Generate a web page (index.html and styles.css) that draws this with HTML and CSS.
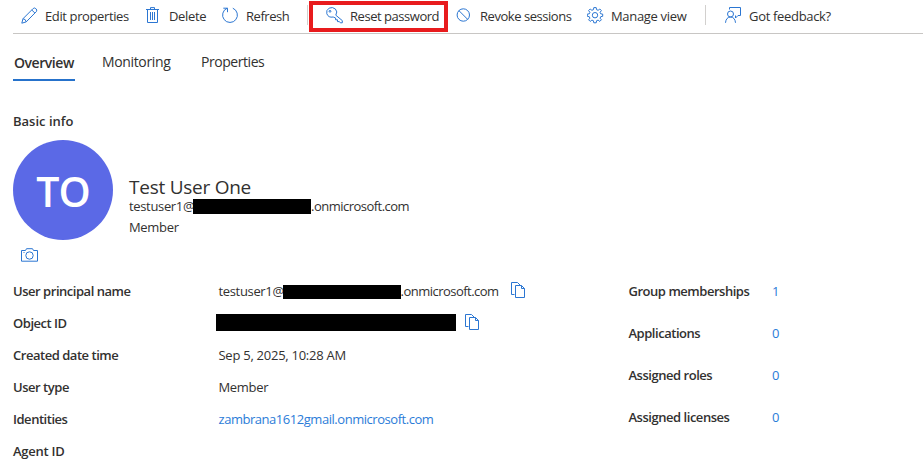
FILE: index.html
```html
<!DOCTYPE html>
<html lang="en">
<head>
<meta charset="utf-8">
<title>Test User One</title>
<link rel="stylesheet" href="styles.css">
</head>
<body>
<svg width="0" height="0" class="defs">
  <symbol id="copy" viewBox="0 0 16 18">
    <path d="M4.5 13.5H1.5V1.5H7.5L10 4M5.5 4.5H11.5L14.5 7.5V16.5H5.5ZM11.5 4.5V7.5H14.5"/>
  </symbol>
</svg>
<nav class="toolbar">
  <div class="cmd"><svg class="icon" viewBox="0 0 17 17"><path d="M.8 16.2 2 11.7 12.2 1.5Q13.4.4 14.8 1.6 16.5 3 15.4 4.5L5.2 14.9ZM2 11.7Q4.8 12 5.2 14.9M10.8 3 14 6.2"/></svg><span class="edit">Edit properties</span></div>
  <div class="cmd"><svg class="icon" viewBox="0 0 17 17"><path d="M1 2.5H14M5.5 2.5V.6H9.5V2.5M2.5 2.5V15.5H12.5V2.5M5.5 5V13M7.5 5V13M9.5 5V13"/></svg><span>Delete</span></div>
  <div class="cmd"><svg class="icon" viewBox="0 0 17 17"><path d="M5.2 1.2A7.4 7.4 0 1 0 10.8 1.2M1.3 1.2H5.5V5.2"/></svg><span class="tight">Refresh</span></div>
  <span class="divider"></span>
  <div class="cmd highlighted"><svg class="icon" viewBox="0 0 17 17"><path d="M9.8 8.2Q12 4.8 9.4 2 6.6-.4 3.2 1.1-.2 3.2.8 6.7 2.4 11 7.2 10L9.6 11V12.8H11.5V14.6H13.4L14.3 15.8H16.3V13.6Z"/><circle cx="4" cy="4.3" r=".9"/></svg><span class="tight">Reset password</span></div>
  <div class="cmd"><svg class="icon" viewBox="0 0 17 17"><circle cx="7.3" cy="8" r="6.2"/><path d="M2.9 3.6 11.7 12.4"/></svg><span class="tight">Revoke sessions</span></div>
  <div class="cmd"><svg class="icon" viewBox="0 0 17 17"><path d="M6.8.6H9.2L9.6 2.7 11.1 3.3 12.8 2 14.4 3.6 13.1 5.3 13.7 6.8 15.7 7.1V9.3L13.7 9.7 13.1 11.2 14.4 12.8 12.8 14.4 11.1 13.1 9.6 13.7 9.2 15.8H6.8L6.4 13.7 4.9 13.1 3.2 14.4 1.6 12.8 2.9 11.2 2.3 9.7.3 9.3V7.1L2.3 6.8 2.9 5.3 1.6 3.6 3.2 2 4.9 3.3 6.4 2.7Z"/><circle cx="8" cy="8.2" r="2.7"/></svg><span>Manage view</span></div>
  <span class="divider"></span>
  <div class="cmd"><svg class="icon" viewBox="0 0 17 17"><circle cx="5.5" cy="7" r="3"/><path d="M.5 15.8Q1 10.2 5.5 10 10 10.2 10.5 15.8M4.5 2.5V.5H15.5V8.5H13L10.5 11V8.5"/></svg><span>Got feedback?</span></div>
</nav>
<div class="tabs">
  <span class="tab active">Overview</span>
  <span class="tab">Monitoring</span>
  <span class="tab">Properties</span>
</div>
<main>
  <h2>Basic info</h2>
  <section class="profile">
    <div class="avatar">TO</div>
    <div class="identity">
      <h1>Test User One</h1>
      <p class="address"><span class="name">testuser1@</span><span class="redacted"></span><span class="domain">.onmicrosoft.com</span></p>
      <p>Member</p>
    </div>
  </section>
  <svg class="camera" viewBox="0 0 17 14"><path d="M.5 2.5H4.5L5.5.7H11.5L12.5 2.5H16.5V13.2H.5Z"/><circle cx="8.5" cy="7.5" r="3.7"/><path d="M2.5 4.5H3.5"/></svg>
  <div class="details">
    <dl class="facts">
      <dt>User principal name</dt><dd class="address"><span class="name">testuser1@</span><span class="redacted short"></span><span class="domain">.onmicrosoft.com</span><svg class="copy"><use href="#copy"/></svg></dd>
      <dt>Object ID</dt><dd class="address"><span class="redacted object"></span><svg class="copy near"><use href="#copy"/></svg></dd>
      <dt>Created date time</dt><dd class="date">Sep 5, 2025, 10:28 AM</dd>
      <dt>User type</dt><dd>Member</dd>
      <dt>Identities</dt><dd class="link tight">zambrana1612gmail.onmicrosoft.com</dd>
      <dt class="loose">Agent ID</dt><dd></dd>
    </dl>
    <dl class="counts">
      <dt>Group memberships</dt><dd class="link">1</dd>
      <dt>Applications</dt><dd class="link">0</dd>
      <dt>Assigned roles</dt><dd class="link">0</dd>
      <dt>Assigned licenses</dt><dd class="link">0</dd>
    </dl>
  </div>
</main>
</body>
</html>
```
FILE: styles.css
```css
*, *::before { box-sizing: border-box; }
body {
  margin: 0;
  height: 468px;
  overflow: hidden;
  background: #fff;
  color: #323130;
  font: 13px/20px "Open Sans", "Noto Sans", sans-serif;
  letter-spacing: -0.32px;
  white-space: nowrap;
}
h1, h2, p, dl, dd { margin: 0; }
.defs { display: block; }
svg { fill: none; stroke: #2b76d2; stroke-width: 1; flex: none; }
.tight { letter-spacing: -0.46px; }
.edit { letter-spacing: -0.38px; }
.date { letter-spacing: -0.26px; }
.toolbar {
  display: grid;
  grid-template-columns: 124px 77px 85px 19px 130px 131px 118px 20px 1fr;
  align-items: center;
  height: 34px;
  margin-left: 13px;
  padding-left: 8px;
  border-bottom: 1px solid #c8c6c4;
}
.cmd { position: relative; display: flex; align-items: center; gap: 7px; height: 33px; padding-bottom: 1px; }
.icon { width: 17px; height: 17px; margin-top: -1px; }
.divider { width: 1px; height: 20px; background: #d2d0ce; margin-top: -3px; }
.highlighted::before {
  content: "";
  position: absolute;
  left: -17px;
  top: 1px;
  width: 139px;
  height: 31px;
  border: 4px solid #e81b1d;
}
.tabs { display: flex; gap: 27px; height: 47px; margin-left: 13px; padding-top: 18px; font-size: 14px; }
.tab { height: 29px; letter-spacing: -0.45px; }
.tab:nth-child(2) { width: 72px; letter-spacing: -0.35px; }
.tab.active { font-weight: 600; border-bottom: 2px solid #2672cb; width: 62px; padding-left: 1px; padding-top: 1px; letter-spacing: -0.45px; }
main { padding-left: 13px; }
h2 { margin-top: 30px; font-size: 13px; line-height: 20px; font-weight: 600; letter-spacing: 0; }
.profile { display: flex; gap: 16px; margin-top: 9px; }
.avatar {
  width: 100px;
  height: 100px;
  border-radius: 50%;
  background: #5b69e6;
  color: #fff;
  font-size: 41px;
  font-weight: 600;
  line-height: 103px;
  text-align: center;
  letter-spacing: -1px;
}
.identity { padding-top: 36px; }
h1 { font-size: 19px; line-height: 22px; font-weight: 400; letter-spacing: -0.25px; }
.identity p { height: 20px; line-height: 18px; }
.identity .address { height: 15px; line-height: 15px; margin: 1px 0 4px; }
.address { display: flex; align-items: center; }
.name { width: 64px; letter-spacing: -0.34px; }
.domain { width: 98px; letter-spacing: -0.52px; }
.redacted { width: 118px; height: 15px; background: #000; }
.redacted.short { height: 14px; margin-top: 1px; }
.object { width: 240px; height: 17px; margin: -2px 0 0 -3px; }
.copy { width: 16px; height: 18px; margin: -3px 0 0 11px; }
.copy.near { margin-left: 8px; }
.camera { display: block; width: 17px; height: 14px; margin: 8px 0 0 8px; }
.details { display: grid; grid-template-columns: 615.5px 1fr; margin-top: 13px; }
.facts { display: grid; grid-template-columns: 205.5px 1fr; grid-auto-rows: 32px; align-items: center; }
.counts { display: grid; grid-template-columns: 143.5px 1fr; grid-auto-rows: 42px; align-items: center; align-self: start; margin-top: -5px; }
dt { font-weight: 600; letter-spacing: -0.47px; }
dt.loose { letter-spacing: -0.25px; }
.link { color: #2b7cd8; }
```
